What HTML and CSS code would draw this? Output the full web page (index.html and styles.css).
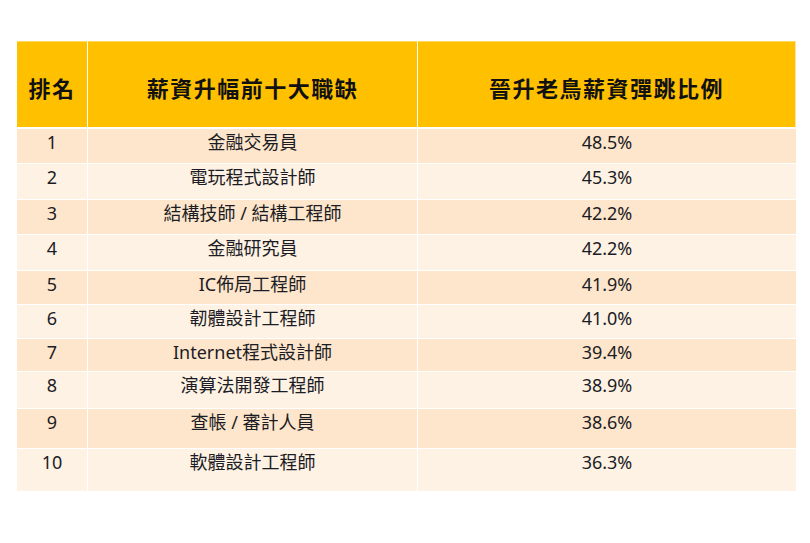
FILE: index.html
```html
<!DOCTYPE html>
<html lang="zh-Hant">
<head>
<meta charset="utf-8">
<title>薪資升幅前十大職缺</title>
<link rel="stylesheet" href="styles.css">
</head>
<body>
<div class="page">
  <div class="table">
    <div class="cell head">排名</div>
    <div class="cell head">薪資升幅前十大職缺</div>
    <div class="cell head last">晉升老鳥薪資彈跳比例</div>

    <div class="cell odd r1">1</div><div class="cell odd r1">金融交易員</div><div class="cell odd r1 last">48.5%</div>
    <div class="cell even r2">2</div><div class="cell even r2">電玩程式設計師</div><div class="cell even r2 last">45.3%</div>
    <div class="cell odd r3">3</div><div class="cell odd r3">結構技師 / 結構工程師</div><div class="cell odd r3 last">42.2%</div>
    <div class="cell even r4">4</div><div class="cell even r4">金融研究員</div><div class="cell even r4 last">42.2%</div>
    <div class="cell odd r5">5</div><div class="cell odd r5">IC佈局工程師</div><div class="cell odd r5 last">41.9%</div>
    <div class="cell even r6">6</div><div class="cell even r6">韌體設計工程師</div><div class="cell even r6 last">41.0%</div>
    <div class="cell odd r7">7</div><div class="cell odd r7">Internet程式設計師</div><div class="cell odd r7 last">39.4%</div>
    <div class="cell even r8">8</div><div class="cell even r8">演算法開發工程師</div><div class="cell even r8 last">38.9%</div>
    <div class="cell odd r9">9</div><div class="cell odd r9">查帳 / 審計人員</div><div class="cell odd r9 last">38.6%</div>
    <div class="cell even r10">10</div><div class="cell even r10">軟體設計工程師</div><div class="cell even r10 last">36.3%</div>
  </div>
</div>
</body>
</html>
```

FILE: styles.css
```css
html, body {
  margin: 0;
  padding: 0;
  background: #ffffff;
}

.page {
  padding: 41px 14px 0 17px;
  font-family: "Noto Sans", "Noto Sans CJK TC", sans-serif;
  color: #1c1c24;
}

.table {
  display: grid;
  width: 779px;
  grid-template-columns: 71px 330px 378px;
  grid-template-rows: 88px 35px 36px 35px 36px 34px 34px 33px 37px 40px 42px;
}

.cell {
  box-sizing: border-box;
  text-align: center;
  border-right: 1px solid #ffffff;
  border-bottom: 1px solid #ffffff;
  font-size: 18px;
  line-height: 22px;
  padding-top: 2px;
}

.cell.last {
  border-right: none;
}

.head {
  background: #ffc000;
  border-top: 1px solid #ffd966;
  border-bottom: 2px solid #ffffff;
  font-family: "Noto Sans CJK TC", sans-serif;
  font-weight: 700;
  font-size: 22px;
  letter-spacing: 1.5px;
  color: #111111;
  display: flex;
  align-items: center;
  justify-content: center;
  padding-top: 4px;
}

.head.last {
  border-right: 1px solid #ffe7a0;
}

.odd {
  background: #fee6cc;
}

.even {
  background: #fef2e5;
}

.r10 {
  border-bottom: none;
}
```
